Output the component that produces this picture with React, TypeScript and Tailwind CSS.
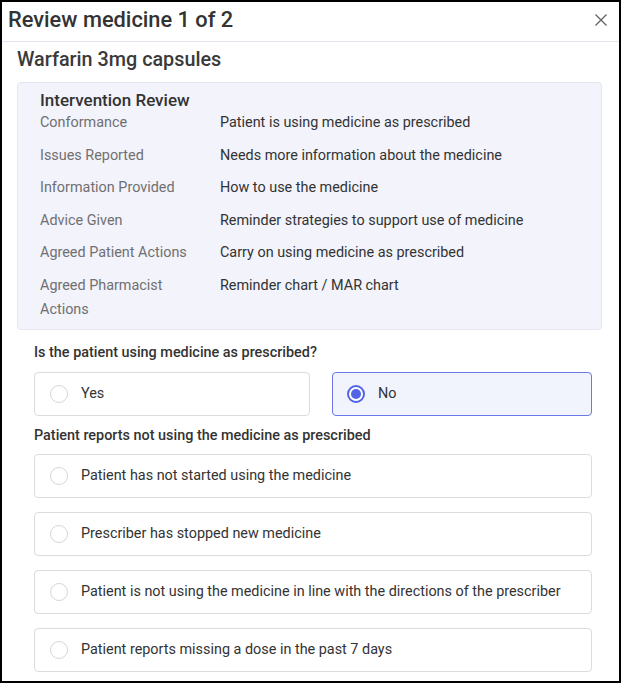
import React from "react";

const rows: [string, string][] = [
  ["Conformance", "Patient is using medicine as prescribed"],
  ["Issues Reported", "Needs more information about the medicine"],
  ["Information Provided", "How to use the medicine"],
  ["Advice Given", "Reminder strategies to support use of medicine"],
  ["Agreed Patient Actions", "Carry on using medicine as prescribed"],
  ["Agreed Pharmacist Actions", "Reminder chart / MAR chart"],
];

const options = [
  "Patient has not started using the medicine",
  "Prescriber has stopped new medicine",
  "Patient is not using the medicine in line with the directions of the prescriber",
  "Patient reports missing a dose in the past 7 days",
];

function Radio({ checked }: { checked?: boolean }) {
  if (checked) {
    return (
      <span className="w-[18px] h-[18px] rounded-full border-2 border-[#5263e6] flex items-center justify-center bg-white shrink-0">
        <span className="w-[10px] h-[10px] rounded-full bg-[#5263e6]" />
      </span>
    );
  }
  return <span className="w-[18px] h-[18px] rounded-full border border-[#d6d6d6] bg-white shrink-0" />;
}

export default function App() {
  return (
    <div
      className="w-[621px] h-[683px] border-2 border-black bg-white overflow-hidden text-[#333]"
      style={{ fontFamily: "Roboto, 'Liberation Sans', sans-serif" }}
    >
      <div className="h-[40px] border-b border-[#e3e8f0] flex items-center justify-between pl-[6px] pr-[10px] pb-[4px]">
        <h1 className="text-[21.8px] font-medium text-[#333] leading-[28px]">Review medicine 1 of 2</h1>
        <svg width="14" height="14" viewBox="0 0 14 14" className="mr-[1px]">
          <path d="M1.5 1.5 L12.5 12.5 M12.5 1.5 L1.5 12.5" stroke="#666" strokeWidth="1.4" />
        </svg>
      </div>
      <div className="pl-[15px] pr-[17px]">
        <h2 className="text-[19.8px] font-medium text-[#3a3a3a] mt-[6px] leading-[24px]">Warfarin 3mg capsules</h2>
        <div className="mt-[10px] bg-[#f2f3fb] border border-[#e3e6f0] rounded-[4px] pl-[22px] pt-[6px] pb-[3px]">
          <div className="text-[17px] font-medium text-[#333] leading-[22px]">Intervention Review</div>
          <div className="flex flex-col">
            {rows.map(([k, v], i) => (
              <div
                key={i}
                className={"flex text-[14.4px] leading-[24px] pb-[4.5px] " + (i === 0 ? "pt-0" : "pt-[4px]")}
              >
                <div className="w-[180px] text-[#707070] pr-[20px]">{k}</div>
                <div className="text-[#333]">{v}</div>
              </div>
            ))}
          </div>
        </div>
        <div className="pl-[17px] pr-[10px]">
          <div className="mt-[13px] text-[14.4px] font-medium text-[#333] leading-[20px]">
            Is the patient using medicine as prescribed?
          </div>
          <div className="mt-[9px] flex gap-[22px]">
            <div className="flex-1 h-[44px] border border-[#dcdcdc] rounded-[4px] flex items-center pl-[15px] gap-[13px] text-[14.4px] bg-white">
              <Radio />
              <span>Yes</span>
            </div>
            <div className="w-[260px] h-[44px] border border-[#6a78e8] rounded-[4px] flex items-center pl-[14px] gap-[13px] text-[14.4px] bg-[#f2f4fd]">
              <Radio checked />
              <span>No</span>
            </div>
          </div>
          <div className="mt-[10px] text-[14.4px] font-medium text-[#333] leading-[20px]">
            Patient reports not using the medicine as prescribed
          </div>
          <div className="mt-[8px] flex flex-col gap-[14px]">
            {options.map((o, i) => (
              <div
                key={i}
                className="h-[44px] border border-[#dcdcdc] rounded-[4px] flex items-center pl-[15px] gap-[13px] text-[14.4px] bg-white"
              >
                <Radio />
                <span>{o}</span>
              </div>
            ))}
          </div>
        </div>
      </div>
    </div>
  );
}
